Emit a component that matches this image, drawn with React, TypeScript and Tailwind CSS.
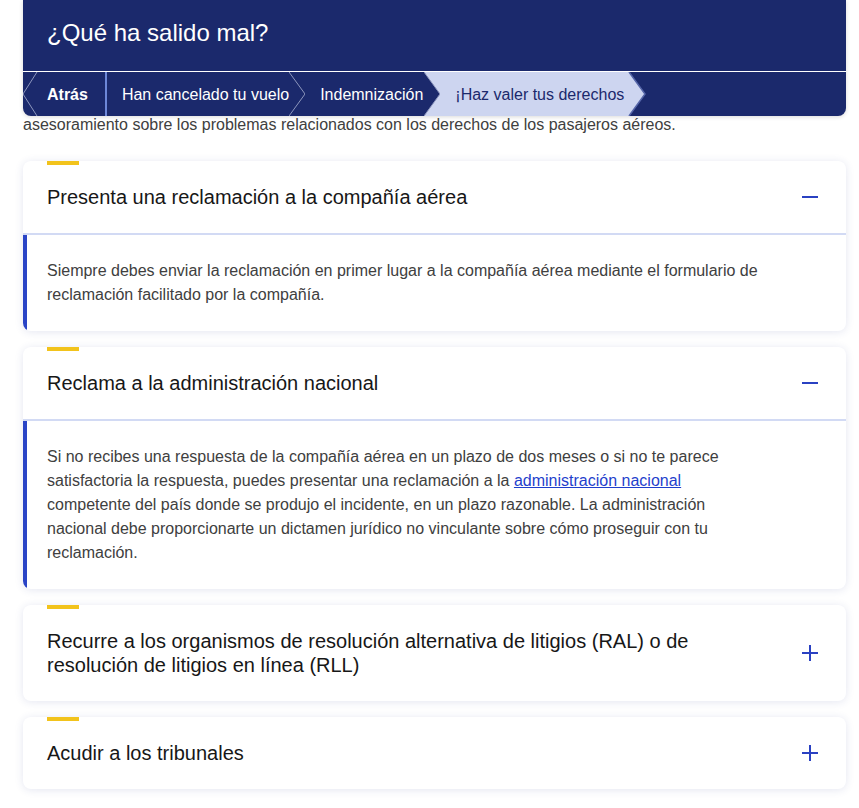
import React from 'react'

const font = { fontFamily: '"Liberation Sans", Arial, Helvetica, sans-serif' }

const Minus = () => (
    <svg width="16" height="16" viewBox="0 0 16 16" className="shrink-0">
        <path d="M0 8h16" stroke="#2a41c2" strokeWidth="2" />
    </svg>
)

const Plus = () => (
    <svg width="16" height="16" viewBox="0 0 16 16" className="shrink-0">
        <path d="M0 8h16M8 0v16" stroke="#2a41c2" strokeWidth="2" />
    </svg>
)

const Card = ({ title, open, children }: { title: React.ReactNode; open?: boolean; children?: React.ReactNode }) => {
    return (
        <div className="relative rounded-lg bg-white overflow-hidden shadow-[0_1px_8px_rgba(45,60,150,0.13)]">
            {/* yellow tab */}
            <span className="absolute left-6 top-0 h-1 w-8 bg-[#f2c31c]" />
            <div className={`flex items-center justify-between gap-6 pl-6 pr-7 py-6 ${open ? 'border-b-2 border-[#d2daf4]' : ''}`}>
                <h3 className="text-[20px] leading-6 text-[#171717] max-w-[720px]">{title}</h3>
                {open ? <Minus /> : <Plus />}
            </div>
            {open && (
                <div className="border-l-4 border-[#2a44c6] pl-5 pr-6 py-6">
                    <p className="max-w-[716px] text-[16px] leading-6 text-[#404040]">{children}</p>
                </div>
            )}
        </div>
    )
}

const Chevron = () => (
    <svg width="16" height="44" viewBox="0 0 16 44" className="shrink-0">
        <polyline points="0,0 16,22 0,44" fill="none" stroke="#8d96bd" strokeWidth="1" />
    </svg>
)

export default function App() {
    return (
        <div className="min-h-screen bg-white pl-[23px] pr-[13px] pb-6" style={font}>
            {/* Sticky header panel */}
            <div className="relative z-10 rounded-b-lg bg-[#1b296c] text-white shadow-[0_1px_4px_rgba(0,0,0,0.15)]">
                <div className="h-[72px] flex items-center px-6 border-b border-white">
                    <h2 className="text-[24px] leading-7 -mt-[6px]">¿Qué ha salido mal?</h2>
                </div>
                <nav className="relative flex h-[44px] items-center text-[16px]">
                    <svg width="16" height="44" viewBox="0 0 16 44" className="absolute left-0 top-0">
                        <polyline points="14,0 0,22 14,44" fill="none" stroke="#8d96bd" strokeWidth="1" />
                    </svg>
                    <span className="pl-6 pr-[17px] pt-px font-bold">Atrás</span>
                    <span className="h-full w-[2px] bg-[#6d87d8]" />
                    <span className="pl-[15px] pt-px">Han cancelado tu vuelo</span>
                    <Chevron />
                    <span className="pl-[15px] pr-px pt-px">Indemnización</span>
                    <div className="flex h-full items-stretch">
                        <svg width="16" height="44" viewBox="0 0 16 44" className="shrink-0">
                            <polygon points="0,0 16,0 16,44 0,44 16,22" fill="#cdd5f0" />
                            <polyline points="0,0 16,22 0,44" fill="none" stroke="#8d96bd" strokeWidth="1" />
                        </svg>
                        <span className="flex items-center bg-[#cdd5f0] pl-[15px] pr-[3px] pt-px text-[#1b296c]">¡Haz valer tus derechos</span>
                        <svg width="20" height="44" viewBox="0 0 20 44" className="shrink-0">
                            <polygon points="0,0 2,0 18,22 2,44 0,44" fill="#cdd5f0" />
                            <polyline points="2,0 18,22 2,44" fill="none" stroke="#5565a8" strokeWidth="1.5" />
                        </svg>
                    </div>
                </nav>
            </div>

            <p className="-mt-[3px] text-[16px] leading-6 text-[#404040]">
                asesoramiento sobre los problemas relacionados con los derechos de los pasajeros aéreos.
            </p>

            <div className="mt-6 flex flex-col gap-4">
                <Card title="Presenta una reclamación a la compañía aérea" open>
                    Siempre debes enviar la reclamación en primer lugar a la compañía aérea mediante el formulario de reclamación facilitado por la compañía.
                </Card>
                <Card title="Reclama a la administración nacional" open>
                    Si no recibes una respuesta de la compañía aérea en un plazo de dos meses o si no te parece satisfactoria la respuesta, puedes presentar una reclamación a la{' '}
                    <a href="#" className="text-[#1f3fcc] underline">administración nacional</a> competente del país donde se produjo el incidente, en un plazo razonable. La administración nacional debe proporcionarte un dictamen jurídico no vinculante sobre cómo proseguir con tu reclamación.
                </Card>
                <Card title="Recurre a los organismos de resolución alternativa de litigios (RAL) o de resolución de litigios en línea (RLL)" />
                <Card title="Acudir a los tribunales" />
            </div>
        </div>
    )
}
